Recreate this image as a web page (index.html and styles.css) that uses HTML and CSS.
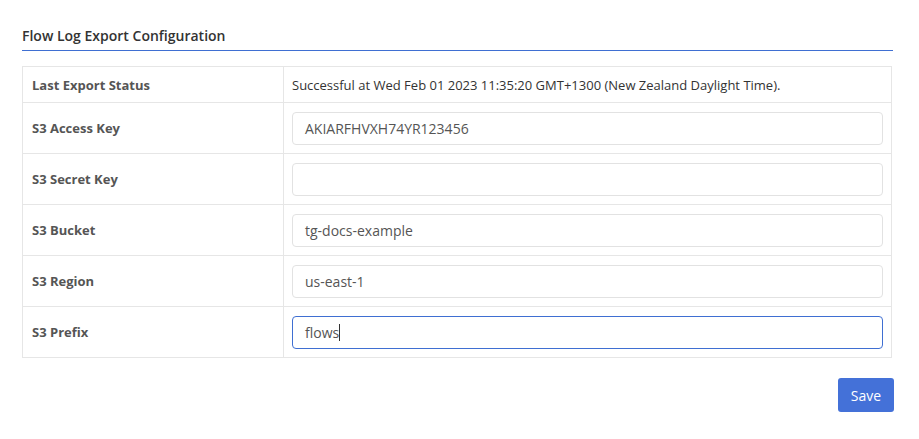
FILE: index.html
```html
<!DOCTYPE html>
<html>
<head>
<meta charset="utf-8">
<link rel="stylesheet" href="styles.css">
</head>
<body>
<div class="page">
  <div class="section-title">Flow Log Export Configuration</div>
  <table class="config">
    <tr class="status-row">
      <th>Last Export Status</th>
      <td class="status">Successful at Wed Feb 01 2023 11:35:20 GMT+1300 (New Zealand Daylight Time).</td>
    </tr>
    <tr>
      <th>S3 Access Key</th>
      <td><div class="input">AKIARFHVXH74YR123456</div></td>
    </tr>
    <tr>
      <th>S3 Secret Key</th>
      <td><div class="input"></div></td>
    </tr>
    <tr>
      <th>S3 Bucket</th>
      <td><div class="input">tg-docs-example</div></td>
    </tr>
    <tr>
      <th>S3 Region</th>
      <td><div class="input">us-east-1</div></td>
    </tr>
    <tr>
      <th>S3 Prefix</th>
      <td><div class="input focused">flows<span class="caret"></span></div></td>
    </tr>
  </table>
  <div class="actions">
    <button class="btn-save">Save</button>
  </div>
</div>
</body>
</html>
```
FILE: styles.css
```css
html, body {
  margin: 0;
  padding: 0;
  background: #ffffff;
}
body {
  font-family: "Open Sans", "DejaVu Sans", sans-serif;
  color: #333;
}
.page {
  width: 871px;
  padding: 27px 0 0 22px;
}
.section-title {
  font-size: 14px;
  font-weight: 600;
  color: #333;
  line-height: 18px;
  padding-bottom: 5px;
  border-bottom: 1px solid #3f6fd2;
}
.config {
  margin-top: 15px;
  width: 870px;
  border-collapse: collapse;
}
.config th, .config td {
  border: 1px solid #e6e6e6;
  padding: 8px;
  vertical-align: middle;
}
.config th {
  width: 243px;
  text-align: left;
  font-size: 13px;
  font-weight: 700;
  color: #555;
  padding-left: 9px;
  height: 34px;
}
.status-row th, .status-row td {
  height: 19px;
}
.config td.status {
  font-size: 13px;
  color: #333;
}
.input {
  box-sizing: border-box;
  height: 33px;
  border: 1px solid #e2e2e2;
  border-radius: 4px;
  padding: 0 12px;
  font-size: 14px;
  color: #555;
  line-height: 31px;
  display: flex;
  align-items: center;
}
.input.focused {
  border-color: #3f6fd2;
}
.caret {
  display: inline-block;
  width: 1px;
  height: 17px;
  background: #333;
}
.actions {
  display: flex;
  justify-content: flex-end;
  margin-top: 20px;
  margin-right: -1px;
}
.btn-save {
  font-family: "Open Sans", "DejaVu Sans", sans-serif;
  font-size: 14px;
  color: #fff;
  background: #4471d8;
  border: none;
  border-radius: 3px;
  width: 56px;
  height: 34px;
  padding: 0;
}
```
